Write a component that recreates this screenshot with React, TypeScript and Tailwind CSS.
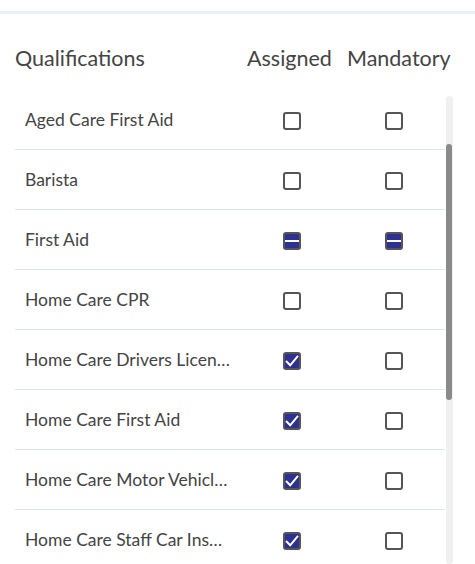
import React from 'react';

type Mark = 'none' | 'checked' | 'mixed';

const rows: { name: string; assigned: Mark; mandatory: Mark }[] = [
  { name: 'Aged Care First Aid', assigned: 'none', mandatory: 'none' },
  { name: 'Barista', assigned: 'none', mandatory: 'none' },
  { name: 'First Aid', assigned: 'mixed', mandatory: 'mixed' },
  { name: 'Home Care CPR', assigned: 'none', mandatory: 'none' },
  { name: 'Home Care Drivers Licence', assigned: 'checked', mandatory: 'none' },
  { name: 'Home Care First Aid', assigned: 'checked', mandatory: 'none' },
  { name: 'Home Care Motor Vehicle Insurance', assigned: 'checked', mandatory: 'none' },
  { name: 'Home Care Staff Car Insurance', assigned: 'checked', mandatory: 'none' },
];

function Box({ mark }: { mark: Mark }) {
  if (mark === 'none') {
    return <div className="w-[18px] h-[18px] rounded-[3px] border-2 border-[#555555] bg-white" />;
  }
  return (
    <div className="w-[18px] h-[18px] rounded-[3px] border-2 border-[#555555] bg-[#2e3192] flex items-center justify-center">
      {mark === 'checked' ? (
        <svg width="14" height="14" viewBox="0 0 14 14">
          <path d="M1 7 L5.2 11.3 L13 1.8" fill="none" stroke="#ffffff" strokeWidth="2" />
        </svg>
      ) : (
        <div className="w-[14px] h-[2px] bg-white" />
      )}
    </div>
  );
}

export default function App() {
  return (
    <div className="w-[475px] h-[564px] bg-white overflow-hidden font-['Lato',sans-serif] text-[#444444]">
      <div className="h-[11px]" />
      <div className="h-[3px] bg-[#e9f0fb]" />

      {/* header */}
      <div className="flex items-center h-[76px] pt-[12px] pl-[15px] text-[21.5px]">
        <div className="flex-1">Qualifications</div>
        <div className="w-[100px]">Assigned</div>
        <div className="w-[128px]">Mandatory</div>
      </div>

      {/* list + scrollbar */}
      <div className="flex pl-[15px] h-[474px]">
        <div className="w-[430px]">
          {rows.map((r) => (
            <div key={r.name} className="flex items-center h-[60px] border-b border-[#dae4f4] pl-[10px] pt-[2px] text-[17.5px]">
              <div className="w-[206px] truncate">{r.name}</div>
              <div className="w-[122px] flex justify-center">
                <Box mark={r.assigned} />
              </div>
              <div className="w-[82px] flex justify-center">
                <Box mark={r.mandatory} />
              </div>
            </div>
          ))}
        </div>
        <div className="w-[7px] ml-[1px] mt-[6px] rounded-full bg-[#f0f0f0]">
          <div className="mt-[48px] h-[256px] w-[6px] rounded-full bg-[#8a8a8a]" />
        </div>
      </div>
    </div>
  );
}
